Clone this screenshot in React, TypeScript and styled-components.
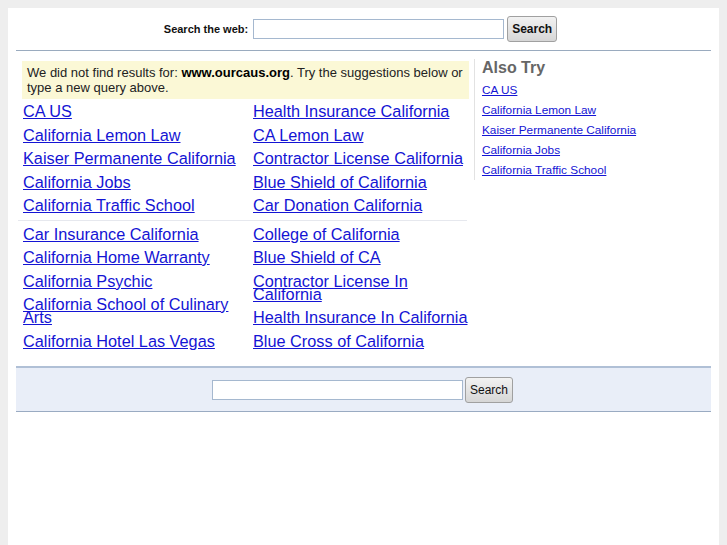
import React from "react";
import styled, { createGlobalStyle } from "styled-components";

const Global = createGlobalStyle`
  html, body { margin: 0; padding: 0; height: 100%; }
  body { background: #eeeeee; font-family: "Liberation Sans", Arial, sans-serif; }
  #root { height: 100%; }
`;

const Outer = styled.div`
  height: 100%;
  padding: 8px 8px 0;
  box-sizing: border-box;
`;

const Panel = styled.div`
  background: #ffffff;
  min-height: 100%;
  padding: 0 8px;
  box-sizing: border-box;
  overflow: hidden;
`;

const Header = styled.div`
  height: 42px;
  border-bottom: 1px solid #9aabbf;
  display: flex;
  align-items: center;
  justify-content: center;
  padding-right: 6px;
`;

const Label = styled.label`
  font-size: 11px;
  font-weight: bold;
  color: #111;
  margin-right: 5px;
`;

const Input = styled.input<{ $w: number }>`
  width: ${(p) => p.$w}px;
  height: 20px;
  box-sizing: border-box;
  border: 1px solid #a5b8cf;
  background: #fff;
  padding: 0 3px;
  margin: 0;
  outline: none;
`;

const Button = styled.button<{ $bold?: boolean }>`
  height: 26px;
  box-sizing: border-box;
  margin-left: ${(p) => (p.$bold ? 3 : 2)}px;
  padding: 0 4px;
  border: 1px solid #a0a0a0;
  border-radius: 3px;
  background: linear-gradient(#f2f2f2, #d6d6d6);
  font-family: "Liberation Sans", Arial, sans-serif;
  font-size: 12px;
  font-weight: ${(p) => (p.$bold ? "bold" : "normal")};
  color: #111;
`;

const Main = styled.div`
  display: flex;
  align-items: flex-start;
  padding-top: 10px;
`;

const Results = styled.div`
  width: 458px;
  flex: none;
  padding-left: 6px;
  padding-right: 5px;
  box-sizing: border-box;
`;

const Notice = styled.div`
  background: #fbf8d6;
  padding: 4px 5px 4px;
  font-size: 13px;
  line-height: 15px;
  color: #222;
  b { color: #000; }
`;

const Group = styled.div`
  display: grid;
  grid-template-columns: 230px 225px;
  padding-top: 1px;
  padding-bottom: 2px;
`;

const Divider = styled.div`
  height: 1px;
  background: #e6e8ee;
  margin: 0 2px 1px -4px;
`;

const Col = styled.div`
  display: flex;
  flex-direction: column;
  padding-left: 1px;
`;

const BigLink = styled.a`
  display: block;
  font-size: 16.3px;
  line-height: 13px;
  padding: 5px 0 5.5px;
  color: #1414d4;
  text-decoration: underline;
`;

const Side = styled.div`
  border-left: 1px solid #e2e2e2;
  padding: 0 0 0 7px;
  margin-top: -2px;
`;

const SideTitle = styled.div`
  font-size: 16px;
  font-weight: bold;
  color: #666;
  line-height: 18px;
  margin-bottom: 3px;
`;

const SmallLink = styled.a`
  display: block;
  font-size: 11.8px;
  line-height: 20px;
  color: #1414d4;
  text-decoration: underline;
`;

const Footer = styled.div`
  margin-top: 11px;
  height: 43px;
  background: #e9eef8;
  border-top: 2px solid #b0c0d6;
  border-bottom: 1px solid #9aabc2;
  display: flex;
  align-items: center;
  justify-content: center;
  padding-right: 2px;
`;

const left1 = [
  "CA US",
  "California Lemon Law",
  "Kaiser Permanente California",
  "California Jobs",
  "California Traffic School",
];
const right1 = [
  "Health Insurance California",
  "CA Lemon Law",
  "Contractor License California",
  "Blue Shield of California",
  "Car Donation California",
];
const left2 = [
  "Car Insurance California",
  "California Home Warranty",
  "California Psychic",
  "California School of Culinary Arts",
  "California Hotel Las Vegas",
];
const right2 = [
  "College of California",
  "Blue Shield of CA",
  "Contractor License In California",
  "Health Insurance In California",
  "Blue Cross of California",
];
const also = [
  "CA US",
  "California Lemon Law",
  "Kaiser Permanente California",
  "California Jobs",
  "California Traffic School",
];

const LinkCol = ({ items }: { items: string[] }) => (
  <Col>
    {items.map((t) => (
      <BigLink href="#" key={t}>
        {t}
      </BigLink>
    ))}
  </Col>
);

export default function App() {
  return (
    <>
      <Global />
      <Outer>
        <Panel>
          <Header>
            <Label>Search the web:</Label>
            <Input $w={251} />
            <Button $bold>Search</Button>
          </Header>
          <Main>
            <Results>
              <Notice>
                We did not find results for: <b>www.ourcaus.org</b>. Try the suggestions below or
                type a new query above.
              </Notice>
              <Group>
                <LinkCol items={left1} />
                <LinkCol items={right1} />
              </Group>
              <Divider />
              <Group>
                <LinkCol items={left2} />
                <LinkCol items={right2} />
              </Group>
            </Results>
            <Side>
              <SideTitle>Also Try</SideTitle>
              {also.map((t) => (
                <SmallLink href="#" key={t}>
                  {t}
                </SmallLink>
              ))}
            </Side>
          </Main>
          <Footer>
            <Input $w={251} />
            <Button>Search</Button>
          </Footer>
        </Panel>
      </Outer>
    </>
  );
}
